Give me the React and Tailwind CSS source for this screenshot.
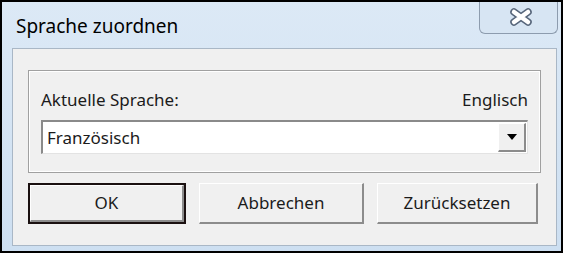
// Classic Windows dialog: "Sprache zuordnen"

var FONT = { fontFamily: "'Noto Sans', 'Open Sans', sans-serif" }

function CloseGlyph() {
  return (
    <svg width="24" height="18" viewBox="0 0 24 18">
      <path d="M5 4 L19 14 M19 4 L5 14" stroke="#56657a" strokeWidth="7.5" strokeLinecap="round" />
      <path d="M5 4 L19 14 M19 4 L5 14" stroke="#ffffff" strokeWidth="4.5" strokeLinecap="round" />
    </svg>
  )
}

function DialogButton({ label, isDefault, width }) {
  var inner = (
    <div className="flex h-full w-full items-center justify-center border-t border-l border-white border-b-2 border-r-2 border-b-[#8c8c8c] border-r-[#8c8c8c] bg-[#f0f0f0] text-[17px] text-[#1b1b1b]">
      {label}
    </div>
  )
  if (isDefault) {
    return <div className="h-[41px] shrink-0 border-2 border-[#1a1010]" style={{ width: width }}>{inner}</div>
  }
  return <div className="h-[41px] shrink-0" style={{ width: width }}>{inner}</div>
}

export default function App() {
  return (
    <div className="h-[255px] w-[568px] bg-white" style={FONT}>
      <div className="flex h-[253px] w-[563px] flex-col border-2 border-black bg-gradient-to-b from-[#dce9f6] to-[#cddff1]">
        {/* Title bar */}
        <div className="flex h-[46px] shrink-0 items-start">
          <span className="ml-[14px] mt-[11px] text-[19px] leading-[26px] text-black">Sprache zuordnen</span>
          <div className="ml-auto mr-[3px] flex h-[32px] w-[79px] items-center justify-center rounded-b-[6px] border border-t-0 border-[#8d9cae] bg-[#d7e5f3] pb-[2px] pl-[4px]">
            <CloseGlyph />
          </div>
        </div>

        {/* Client area */}
        <div className="ml-[10px] mr-[4px] flex flex-1 flex-col border border-[#a9b7c6] bg-[#f0f0f0] px-[15px] pt-[21px]">
          {/* Group box */}
          <div className="border border-[#a0a0a0]">
            <div className="border border-white px-[11px] pb-[17px] pt-[15px]">
              <div className="flex items-center justify-between text-[17px] leading-[26px] text-[#1b1b1b]">
                <span>Aktuelle Sprache:</span>
                <span>Englisch</span>
              </div>
              <div className="mt-[7px] flex h-[34px] items-stretch border-t-2 border-l-2 border-[#8a8a8a] border-b border-r border-b-[#e3e3e3] border-r-[#e3e3e3] bg-white">
                <span className="flex flex-1 items-center pl-[4px] text-[17px] text-[#1b1b1b]">Französisch</span>
                <div className="m-[1px] flex w-[28px] items-center justify-center border-t border-l border-white border-b-2 border-r-2 border-b-[#8c8c8c] border-r-[#8c8c8c] bg-[#f0f0f0]">
                  <svg width="10" height="6" viewBox="0 0 10 6">
                    <path d="M0 0 H10 L5 6 Z" fill="#000" />
                  </svg>
                </div>
              </div>
            </div>
          </div>

          {/* Buttons */}
          <div className="mt-[10px] flex gap-[13px]">
            <DialogButton label="OK" isDefault width={158} />
            <DialogButton label="Abbrechen" width={165} />
            <DialogButton label="Zurücksetzen" width={161} />
          </div>
        </div>
        <div className="h-[5px] shrink-0" />
      </div>
    </div>
  )
}
